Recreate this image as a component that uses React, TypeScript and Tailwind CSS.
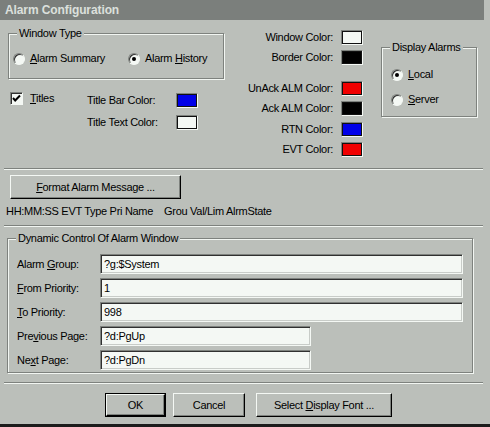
import React from 'react'

const BG = 'bg-[#bbbfba]'

function U({ children }: { children: React.ReactNode }) {
  return <span className="underline underline-offset-[1px] decoration-[1px]">{children}</span>
}

function Group({ label, className, children }: { label: string; className: string; children?: React.ReactNode }) {
  return (
    <div className={`relative border border-[#7e827e] shadow-[1px_1px_0_#f2f6f2,inset_1px_1px_0_#f2f6f2] ${className}`}>
      <span className={`absolute top-[-7px] left-[8px] ${BG} px-[2px] leading-[13px]`}>{label}</span>
      {children}
    </div>
  )
}

function Sep({ className = '' }: { className?: string }) {
  return <div className={`h-0 border-t border-t-[#7e827e] border-b border-b-[#f2f6f2] ${className}`} />
}

function Radio({ checked, children, className = '' }: { checked?: boolean; children: React.ReactNode; className?: string }) {
  return (
    <div className={`flex items-center ${className}`}>
      <div className="w-[12px] h-[12px] rounded-full bg-[#f4f8f4] border border-t-[#7e827e] border-l-[#7e827e] border-b-[#f4f8f4] border-r-[#f4f8f4] shadow-[inset_1px_1px_0_#303030] flex items-center justify-center">
        {checked && <div className="w-[4px] h-[4px] rounded-full bg-black" />}
      </div>
      <span className="ml-[5px] leading-[13px]">{children}</span>
    </div>
  )
}

function Swatch({ color }: { color: string }) {
  return (
    <div className="w-[22px] h-[15px] border border-t-[#7e827e] border-l-[#7e827e] border-b-[#f4f8f4] border-r-[#f4f8f4]">
      <div className={`w-full h-full border border-[#101010] ${color}`} />
    </div>
  )
}

function Input({ value, w }: { value: string; w: string }) {
  return (
    <div className={`${w} h-[20px] bg-[#f4f8f4] border border-t-[#7e827e] border-l-[#7e827e] border-b-[#f4f8f4] border-r-[#f4f8f4] shadow-[inset_1px_1px_0_#303030,inset_-1px_-1px_0_#c8ccc8] flex items-center pl-[3px] leading-[13px]`}>
      {value}
    </div>
  )
}

function Button({ children, w, def }: { children: React.ReactNode; w: string; def?: boolean }) {
  return (
    <div className={`${w} h-[24px] ${def ? 'border border-black' : ''}`}>
      <div className="w-full h-full border border-t-[#f4f8f4] border-l-[#f4f8f4] border-b-black border-r-black shadow-[inset_-1px_-1px_0_#7e827e] flex items-center justify-center leading-[13px]">
        {children}
      </div>
    </div>
  )
}

function ColorRow({ label, color, mt }: { label: React.ReactNode; color: string; mt: string }) {
  return (
    <div className={`flex items-center h-[15px] ${mt}`}>
      <span className="w-[107px] text-right leading-[13px] whitespace-nowrap">{label}</span>
      <div className="ml-[8px]">
        <Swatch color={color} />
      </div>
    </div>
  )
}

function FieldRow({ label, value, w, mt }: { label: React.ReactNode; value: string; w: string; mt: string }) {
  return (
    <div className={`flex items-center ${mt}`}>
      <span className="w-[83px] leading-[13px]">{label}</span>
      <Input value={value} w={w} />
    </div>
  )
}

export default function App() {
  return (
    <div className={`w-[490px] h-[427px] ${BG} border-b-[3px] border-b-[#1c1c1c] text-[11px] tracking-[-0.3px] text-black font-['Liberation_Sans',Arial,sans-serif] flex flex-col overflow-hidden select-none`}>
      {/* title bar */}
      <div className="w-[484px] h-[20px] shrink-0 bg-[#7b7f7c] text-[#dce0dc] text-[12px] tracking-[-0.1px] font-bold pl-[5px] flex items-center">
        Alarm Configuration
      </div>

      {/* top area */}
      <div className="flex h-[148px] shrink-0">
        <div className="w-[226px]">
          <Group label="Window Type" className="ml-[8px] mt-[13px] w-[216px] h-[46px]">
            <div className="flex pt-[18px] pl-[4px]">
              <Radio className="w-[115px]">
                <U>A</U>larm Summary
              </Radio>
              <Radio checked>
                Alarm <U>H</U>istory
              </Radio>
            </div>
          </Group>
          <div className="flex mt-[13px]">
            <div className="w-[87px] pl-[10px] flex items-start">
              <div className="w-[13px] h-[13px] bg-[#f4f8f4] border border-t-[#7e827e] border-l-[#7e827e] border-b-[#f4f8f4] border-r-[#f4f8f4] shadow-[inset_1px_1px_0_#303030] flex items-center justify-center">
                <svg width="9" height="9" viewBox="0 0 9 9">
                  <path d="M1 4 L3.2 6.5 L8 1.5" stroke="black" strokeWidth="2" fill="none" />
                </svg>
              </div>
              <span className="ml-[7px] leading-[13px]">
                <U>T</U>itles
              </span>
            </div>
            <div className="flex flex-col">
              <div className="flex items-center h-[15px] mt-[1px]">
                <span className="w-[89px] leading-[13px]">Title Bar Color:</span>
                <Swatch color="bg-[#0000e8]" />
              </div>
              <div className="flex items-center h-[15px] mt-[7px]">
                <span className="w-[89px] leading-[13px]">Title Text Color:</span>
                <Swatch color="bg-[#f4f8f4]" />
              </div>
            </div>
          </div>
        </div>

        <div className="flex flex-col">
          <ColorRow label="Window Color:" color="bg-[#f4f8f4]" mt="mt-[10px]" />
          <ColorRow label="Border Color:" color="bg-black" mt="mt-[5px]" />
          <ColorRow label="UnAck ALM Color:" color="bg-[#f00000]" mt="mt-[16px]" />
          <ColorRow label="Ack ALM Color:" color="bg-black" mt="mt-[5px]" />
          <ColorRow label="RTN Color:" color="bg-[#0000e8]" mt="mt-[6px]" />
          <ColorRow label="EVT Color:" color="bg-[#f00000]" mt="mt-[5px]" />
        </div>

        <Group label="Display Alarms" className="ml-[18px] mt-[27px] w-[96px] h-[70px]">
          <div className="flex flex-col pt-[20px] pl-[9px] gap-[12px]">
            <Radio checked>
              <U>L</U>ocal
            </Radio>
            <Radio>
              <U>S</U>erver
            </Radio>
          </div>
        </Group>
      </div>

      <Sep className="ml-[4px] w-[479px]" />

      <div className="ml-[10px] mt-[5px]">
        <Button w="w-[171px]">
          <span>
            <U>F</U>ormat Alarm Message ...
          </span>
        </Button>
      </div>

      <div className="ml-[6px] mt-[6px] h-[13px] leading-[13px] whitespace-pre">
        HH:MM:SS EVT Type Pri Name    Grou Val/Lim AlrmState
      </div>

      <Sep className="ml-[4px] w-[479px] mt-[7px]" />

      <Group label="Dynamic Control Of Alarm Window" className="ml-[7px] mt-[11px] w-[466px] h-[135px] shrink-0">
        <div className="flex flex-col pt-[15px] pl-[9px]">
          <FieldRow label={<>Alarm <U>G</U>roup:</>} value="?g:$System" w="w-[363px]" mt="" />
          <FieldRow label={<><U>F</U>rom Priority:</>} value="1" w="w-[363px]" mt="mt-[4px]" />
          <FieldRow label={<><U>T</U>o Priority:</>} value="998" w="w-[363px]" mt="mt-[4px]" />
          <FieldRow label={<>Pre<U>v</U>ious Page:</>} value="?d:PgUp" w="w-[211px]" mt="mt-[4px]" />
          <FieldRow label={<>Ne<U>x</U>t Page:</>} value="?d:PgDn" w="w-[211px]" mt="mt-[4px]" />
        </div>
      </Group>

      <Sep className="ml-[4px] w-[479px] mt-[9px]" />

      <div className="flex mt-[9px] ml-[105px]">
        <Button w="w-[61px]" def>
          OK
        </Button>
        <div className="ml-[7px]">
          <Button w="w-[72px]">Cancel</Button>
        </div>
        <div className="ml-[11px]">
          <Button w="w-[136px]">
            <span>
              Select <U>D</U>isplay Font ...
            </span>
          </Button>
        </div>
      </div>
    </div>
  )
}
